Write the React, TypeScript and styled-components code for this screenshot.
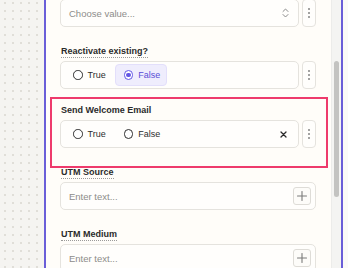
import React from "react";
import styled, { createGlobalStyle, css } from "styled-components";

const Global = createGlobalStyle`
  html, body { margin: 0; padding: 0; }
  body {
    width: 348px;
    height: 268px;
    overflow: hidden;
    background: #fbfaf7;
    font-family: "Liberation Sans", Arial, sans-serif;
  }
`;

const Page = styled.div`
  display: flex;
  height: 268px;
`;

const Canvas = styled.div`
  width: 44px;
  flex: none;
  background-color: #f5f4f1;
  background-image: radial-gradient(circle, #e0ded8 0.8px, transparent 1.1px);
  background-size: 8px 8px;
  background-position: 1px -1px;
`;

const Panel = styled.div`
  display: flex;
  width: 295px;
  flex: none;
  border-left: 2px solid #6a5ed8;
  border-right: 2px solid #6a5ed8;
  background: #fffdf9;
  overflow: hidden;
`;

const Content = styled.div`
  flex: 1;
  padding: 0 15px 0 14px;
  display: flex;
  flex-direction: column;
`;

const Track = styled.div`
  width: 10px;
  flex: none;
  background: #f4f4f2;
  border-left: 1px solid #ececea;
  box-sizing: border-box;
  padding-top: 61px;
`;

const Thumb = styled.div`
  width: 5px;
  height: 136px;
  margin-left: 2px;
  border-radius: 3px;
  background: #c3c3c1;
`;

const Group = styled.div<{ $mt: number; $highlight?: boolean }>`
  position: relative;
  margin-top: ${(p) => p.$mt}px;
  display: flex;
  flex-direction: column;
  ${(p) =>
    p.$highlight &&
    css`
      &::before {
        content: "";
        position: absolute;
        top: -5px;
        left: -10px;
        right: -12px;
        bottom: -20px;
        border: 2px solid #ee3a6c;
        pointer-events: none;
      }
    `}
`;

const Label = styled.div`
  height: 16px;
  margin-bottom: 2px;
  padding-left: 1px;
  font-size: 9px;
  line-height: 17px;
  font-weight: 700;
  color: #2b2b2b;
`;

const Hint = styled.span`
  border-bottom: 1px dotted #9a9a9a;
  padding-bottom: 1px;
`;

const Row = styled.div`
  display: flex;
  gap: 3px;
`;

const Box = styled.div<{ $pad?: number }>`
  flex: 1;
  height: 28px;
  box-sizing: border-box;
  border: 1px solid #e5e3de;
  border-radius: 5px;
  background: #fffefc;
  display: flex;
  align-items: center;
  padding: 0 ${(p) => p.$pad ?? 8}px 0 8px;
`;

const RadioBox = styled(Box)`
  padding: 0 11px 0 3px;
  gap: 2px;
`;

const Placeholder = styled.span`
  flex: 1;
  font-size: 9.5px;
  color: #8d8c8a;
`;

const Kebab = styled.div`
  width: 14px;
  height: 28px;
  flex: none;
  box-sizing: border-box;
  border: 1px solid #e5e3de;
  border-radius: 4px;
  background: #fffefc;
  display: flex;
  flex-direction: column;
  align-items: center;
  justify-content: center;
  gap: 2px;
  & > i {
    width: 2px;
    height: 2px;
    border-radius: 1px;
    background: #858585;
  }
`;

const Option = styled.div<{ $on?: boolean }>`
  height: 22px;
  box-sizing: border-box;
  display: inline-flex;
  align-items: center;
  gap: 5px;
  padding: 0 6px 0 8px;
  border-radius: 4px;
  border: 1px solid ${(p) => (p.$on ? "#e3dffb" : "transparent")};
  background: ${(p) => (p.$on ? "#efedfd" : "transparent")};
  font-size: 9px;
  color: ${(p) => (p.$on ? "#5a4ed6" : "#2e2e2e")};
`;

const Circle = styled.span<{ $on?: boolean }>`
  width: 9.5px;
  height: 9.5px;
  box-sizing: border-box;
  border-radius: 50%;
  border: 1.3px solid ${(p) => (p.$on ? "#6356e5" : "#2e2e2e")};
  background: #fff;
  display: flex;
  align-items: center;
  justify-content: center;
  &::after {
    content: "";
    display: ${(p) => (p.$on ? "block" : "none")};
    width: 4.5px;
    height: 4.5px;
    border-radius: 50%;
    background: #6356e5;
  }
`;

const Spacer = styled.span`
  flex: 1;
`;

const PlusBtn = styled.div`
  width: 18px;
  height: 18px;
  box-sizing: border-box;
  border: 1px solid #dedcd7;
  border-radius: 3px;
  background: #fdfcf9;
  display: flex;
  align-items: center;
  justify-content: center;
`;

const Dots = () => (
  <Kebab>
    <i />
    <i />
    <i />
  </Kebab>
);

const Radio = ({ label, on }: { label: string; on?: boolean }) => (
  <Option $on={on}>
    <Circle $on={on} />
    {label}
  </Option>
);

const Chevrons = () => (
  <svg width="7" height="10" viewBox="0 0 7 10" fill="none" stroke="#8a8a8a" strokeWidth="1" strokeLinecap="round" strokeLinejoin="round">
    <path d="M1 3.5L3.5 1L6 3.5" />
    <path d="M1 6.5L3.5 9L6 6.5" />
  </svg>
);

const Close = () => (
  <svg width="7" height="7" viewBox="0 0 7 7" fill="none" stroke="#2b2b2b" strokeWidth="1.3" strokeLinecap="round">
    <path d="M1 1L6 6M6 1L1 6" />
  </svg>
);

const Plus = () => (
  <svg width="10" height="10" viewBox="0 0 10 10" fill="none" stroke="#7a7a7a" strokeWidth="1.1" strokeLinecap="round">
    <path d="M5 0.5V9.5M0.5 5H9.5" />
  </svg>
);

export default function App() {
  return (
    <>
      <Global />
      <Page>
        <Canvas />
        <Panel>
          <Content>
            <Group $mt={-1}>
              <Row>
                <Box $pad={9}>
                  <Placeholder>Choose value...</Placeholder>
                  <Chevrons />
                </Box>
                <Dots />
              </Row>
            </Group>

            <Group $mt={16}>
              <Label>
                <Hint>Reactivate existing?</Hint>
              </Label>
              <Row>
                <RadioBox>
                  <Radio label="True" />
                  <Radio label="False" on />
                </RadioBox>
                <Dots />
              </Row>
            </Group>

            <Group $mt={13} $highlight>
              <Label>Send Welcome Email</Label>
              <Row>
                <RadioBox>
                  <Radio label="True" />
                  <Radio label="False" />
                  <Spacer />
                  <Close />
                </RadioBox>
                <Dots />
              </Row>
            </Group>

            <Group $mt={16}>
              <Label>
                <Hint>UTM Source</Hint>
              </Label>
              <Row>
                <Box $pad={4}>
                  <Placeholder>Enter text...</Placeholder>
                  <PlusBtn>
                    <Plus />
                  </PlusBtn>
                </Box>
              </Row>
            </Group>

            <Group $mt={16}>
              <Label>
                <Hint>UTM Medium</Hint>
              </Label>
              <Row>
                <Box $pad={4}>
                  <Placeholder>Enter text...</Placeholder>
                  <PlusBtn>
                    <Plus />
                  </PlusBtn>
                </Box>
              </Row>
            </Group>
          </Content>
          <Track>
            <Thumb />
          </Track>
        </Panel>
      </Page>
    </>
  );
}
